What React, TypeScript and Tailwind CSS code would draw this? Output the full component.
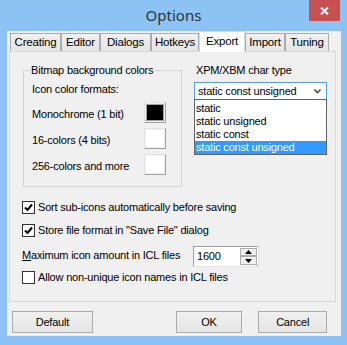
import React from 'react'

const font = { fontFamily: '"Liberation Sans", Arial, sans-serif' }

const tabs = [
    { name: 'Creating', w: 'w-[51px]' },
    { name: 'Editor', w: 'w-[39px]' },
    { name: 'Dialogs', w: 'w-[51px]' },
    { name: 'Hotkeys', w: 'w-[48px]' },
    { name: 'Export', w: 'w-[46px]', active: true },
    { name: 'Import', w: 'w-[40px]' },
    { name: 'Tuning', w: 'w-[44px]' },
]

function Check({ checked }: { checked?: boolean }) {
    return (
        <span className="w-[13px] h-[13px] border border-[#333] bg-white flex items-center justify-center shrink-0">
            {checked && (
                <svg width="9" height="9" viewBox="0 0 9 9">
                    <path d="M1 4.5 L3.5 7 L8 1.5" stroke="#000" strokeWidth="2" fill="none" />
                </svg>
            )}
        </span>
    )
}

function Swatch({ color }: { color: string }) {
    return (
        <span className="w-[22px] h-[21px] border border-t-[#e3e3e3] border-l-[#e3e3e3] border-r-[#a0a0a0] border-b-[#a0a0a0] p-[1px] bg-[#f0f0f0] shrink-0">
            <span className={`block w-full h-full border border-[#a0a0a0] ${color}`} />
        </span>
    )
}

function Button({ label, w }: { label: string; w: string }) {
    return (
        <button className={`${w} h-[22px] border border-[#acacac] bg-gradient-to-b from-[#f0f0f0] to-[#e5e5e5] text-[11px] text-black`}>
            {label}
        </button>
    )
}

export default function App() {
    return (
        <div className="w-[347px] h-[345px] bg-[#8cc3f4] flex flex-col overflow-hidden" style={font}>
            {/* Title bar */}
            <div className="h-[31px] relative flex justify-center pt-[4px] shrink-0">
                <span className="text-[15px] text-[#2b3440]" style={{ fontFamily: '"Noto Sans", "Open Sans", sans-serif' }}>Options</span>
                <div className="absolute right-[7px] top-0 w-[31px] h-[21px] bg-[#c75050] flex items-center justify-center">
                    <svg width="9" height="8" viewBox="0 0 9 8">
                        <path d="M1 0.5 L8 7.5 M8 0.5 L1 7.5" stroke="#fff" strokeWidth="2" />
                    </svg>
                </div>
            </div>

            {/* Client area */}
            <div className="ml-[7px] w-[334px] h-[305px] bg-[#f0f0f0] flex flex-col text-[11px] text-black tracking-[-0.2px]">
                {/* Tabs */}
                <div className="flex items-end h-[20px] pl-[3px]">
                    {tabs.map(t => (
                        <div
                            key={t.name}
                            className={
                                t.active
                                    ? `${t.w} h-[21px] -mb-[1px] relative z-10 bg-white border border-b-0 border-[#d9d9d9] flex items-center justify-center text-[11.5px]`
                                    : `${t.w} h-[18px] bg-gradient-to-b from-[#f0f0f0] to-[#e5e5e5] border border-b-0 border-[#acacac] flex items-center justify-center text-[11.5px]`
                            }
                        >
                            {t.name}
                        </div>
                    ))}
                </div>

                {/* Panel */}
                <div className="ml-[2px] w-[327px] h-[251px] border border-[#d9d9d9] bg-[#f0f0f0] flex flex-col">
                    <div className="flex">
                        {/* Group box */}
                        <div className="ml-[13px] mt-[18px] w-[159px] h-[117px] border border-[#d5d5d5] relative flex flex-col pl-[8px] pr-[15px]">
                            <span className="absolute left-[6px] -top-[7px] px-[1px] bg-[#f0f0f0] leading-[13px]">Bitmap background colors</span>
                            <div className="mt-[12px] leading-[13px]">Icon color formats:</div>
                            <div className="mt-[6px] flex items-center justify-between">
                                <span className="pt-[4px]">Monochrome (1 bit)</span>
                                <Swatch color="bg-black" />
                            </div>
                            <div className="mt-[5px] flex items-center justify-between">
                                <span className="pt-[4px]">16-colors (4 bits)</span>
                                <Swatch color="bg-white border-white" />
                            </div>
                            <div className="mt-[5px] flex items-center justify-between">
                                <span className="pt-[4px]">256-colors and more</span>
                                <Swatch color="bg-white border-white" />
                            </div>
                        </div>

                        {/* Char type combo */}
                        <div className="ml-[12px] mt-[12px] flex flex-col">
                            <span className="ml-[2px] leading-[13px]">XPM/XBM char type</span>
                            <div className="relative mt-[5px] w-[133px] h-[18px] border border-[#569de5] bg-white flex items-center pl-[3px] pr-[5px] justify-between">
                                <span>static const unsigned</span>
                                <svg width="7" height="5" viewBox="0 0 7 5">
                                    <path d="M0.5 0.5 L3.5 3.5 L6.5 0.5" stroke="#555" strokeWidth="1.6" fill="none" />
                                </svg>
                                <div className="absolute left-[-1px] top-[16px] w-[133px] border border-[#646464] bg-white pt-[2px] flex flex-col z-20">
                                    <span className="h-[13px] leading-[13px] pl-[1px]">static</span>
                                    <span className="h-[13px] leading-[13px] pl-[1px]">static unsigned</span>
                                    <span className="h-[13px] leading-[13px] pl-[1px]">static const</span>
                                    <span className="h-[13px] leading-[13px] pl-[1px] bg-[#3399ff] text-white">static const unsigned</span>
                                </div>
                            </div>
                        </div>
                    </div>

                    <div className="ml-[12px] flex flex-col">
                        <div className="mt-[14px] h-[13px] flex items-center gap-[3px]">
                            <Check checked />
                            <span>Sort sub-icons automatically before saving</span>
                        </div>
                        <div className="mt-[10px] h-[13px] flex items-center gap-[3px]">
                            <Check checked />
                            <span>Store file format in "Save File" dialog</span>
                        </div>
                        <div className="mt-[9px] h-[21px] flex items-center">
                            <span className="w-[171px] pb-[3px]"><span className="underline">M</span>aximum icon amount in ICL files</span>
                            <div className="w-[66px] h-[21px] border border-t-[#a0a0a0] border-l-[#a0a0a0] border-r-[#e3e3e3] border-b-[#e3e3e3] bg-white flex items-center pl-[3px] pr-[1px] justify-between">
                                <span>1600</span>
                                <div className="w-[17px] h-[17px] flex flex-col">
                                    <div className="h-[8px] border border-[#adadad] bg-[#f0f0f0] flex items-center justify-center">
                                        <svg width="7" height="4" viewBox="0 0 7 4"><path d="M0 4 L3.5 0 L7 4 Z" fill="#000" /></svg>
                                    </div>
                                    <div className="h-[9px] border border-[#adadad] bg-[#f0f0f0] flex items-center justify-center">
                                        <svg width="7" height="4" viewBox="0 0 7 4"><path d="M0 0 L3.5 4 L7 0 Z" fill="#000" /></svg>
                                    </div>
                                </div>
                            </div>
                        </div>
                        <div className="mt-[4px] h-[13px] flex items-center gap-[3px]">
                            <Check />
                            <span>Allow non-unique icon names in ICL files</span>
                        </div>
                    </div>
                </div>

                {/* Buttons */}
                <div className="mt-[9px] flex items-center pl-[5px]">
                    <Button label="Default" w="w-[81px]" />
                    <div className="w-[83px] ml-auto" />
                    <Button label="OK" w="w-[67px]" />
                    <div className="w-[16px]" />
                    <Button label="Cancel" w="w-[69px]" />
                    <div className="w-[14px]" />
                </div>
            </div>
        </div>
    )
}
